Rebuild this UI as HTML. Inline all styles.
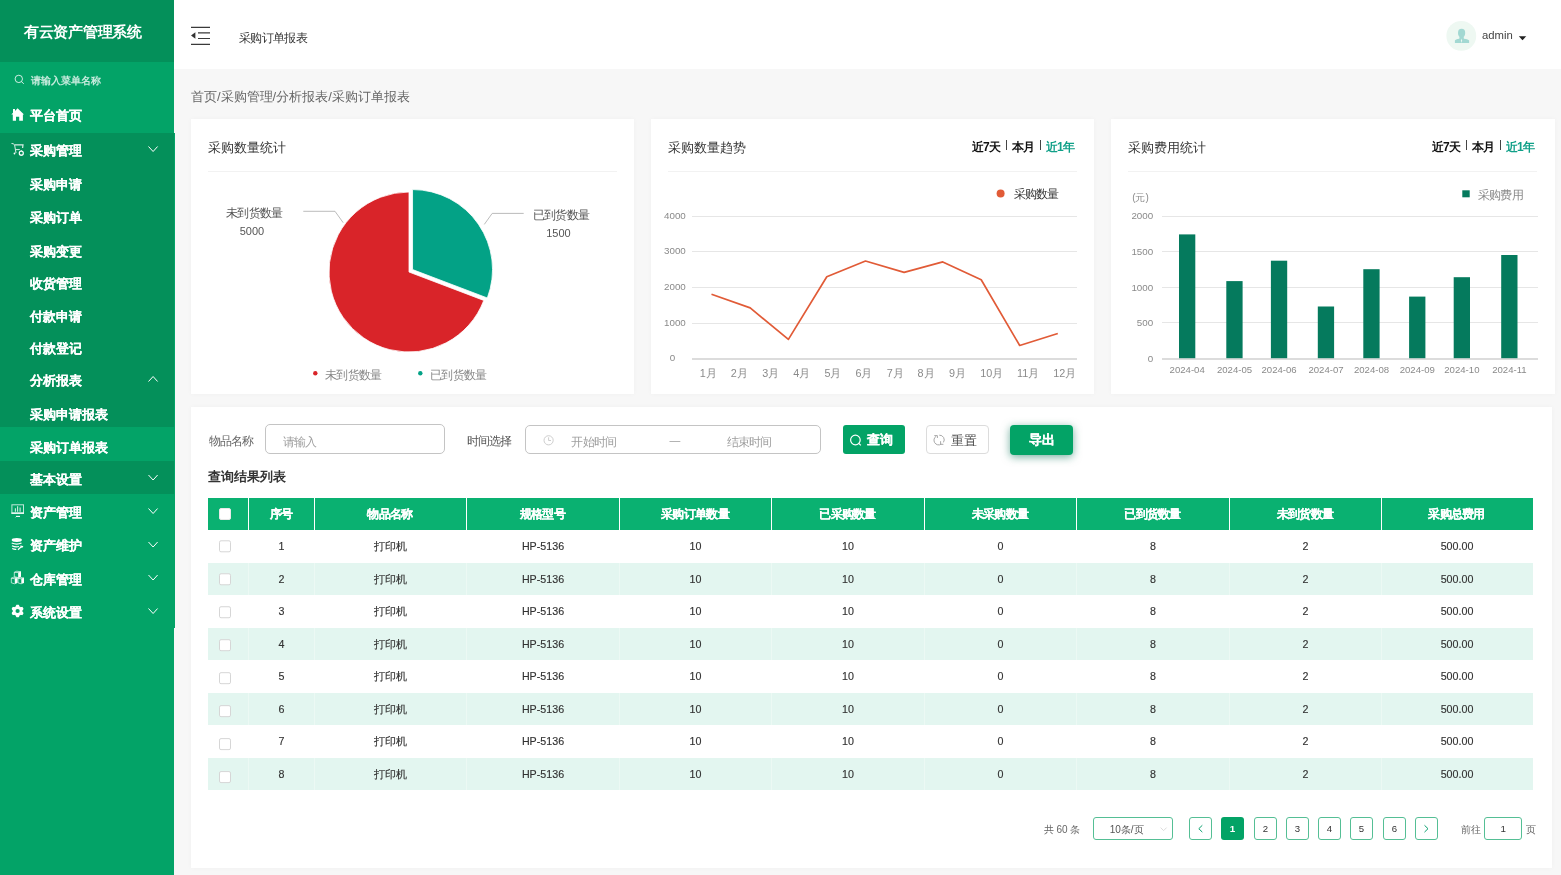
<!DOCTYPE html>
<html><head><meta charset="utf-8">
<style>
*{box-sizing:border-box;margin:0;padding:0}
html,body{width:1561px;height:875px;overflow:hidden}
body{background:#f7f7f7;font-family:"Liberation Sans",sans-serif;color:#333;position:relative}
.t{position:absolute;white-space:nowrap}
.r{position:absolute}
svg{position:absolute;left:0;top:0}
</style></head><body>
<div class="r" style="left:0px;top:0px;width:174px;height:875px;background:#03a367"></div>
<div class="r" style="left:0px;top:0px;width:174px;height:62px;background:#04905a"></div>
<div class="r" style="left:0px;top:133px;width:175px;height:294px;background:#04905a"></div>
<div class="r" style="left:0px;top:461px;width:175px;height:33px;background:#04905a"></div>
<div class="r" style="left:174px;top:133px;width:1px;height:495px;background:#03a367"></div>
<div class="r" style="left:174px;top:0px;width:1387px;height:69px;background:#fff"></div>
<div class="r" style="left:191px;top:119px;width:443px;height:275px;background:#fff;box-shadow:0 0 5px rgba(0,0,0,0.03)"></div>
<div class="r" style="left:651px;top:119px;width:443px;height:275px;background:#fff;box-shadow:0 0 5px rgba(0,0,0,0.03)"></div>
<div class="r" style="left:1111px;top:119px;width:444px;height:275px;background:#fff;box-shadow:0 0 5px rgba(0,0,0,0.03)"></div>
<div class="r" style="left:191px;top:407px;width:1361px;height:461px;background:#fff;box-shadow:0 0 5px rgba(0,0,0,0.03)"></div>
<div class="r" style="left:208px;top:171px;width:409px;height:1px;background:#f2f2f2"></div>
<div class="r" style="left:668px;top:171px;width:409px;height:1px;background:#f2f2f2"></div>
<div class="r" style="left:1128px;top:171px;width:409px;height:1px;background:#f2f2f2"></div>
<div class="r" style="left:208px;top:498px;width:1325px;height:32px;background:#0ab171"></div>
<div class="r" style="left:208px;top:562.5px;width:1325px;height:32.5px;background:#e3f6f0"></div>
<div class="r" style="left:248px;top:562.5px;width:1px;height:32.5px;background:#ecf9f4"></div>
<div class="r" style="left:314px;top:562.5px;width:1px;height:32.5px;background:#ecf9f4"></div>
<div class="r" style="left:466px;top:562.5px;width:1px;height:32.5px;background:#ecf9f4"></div>
<div class="r" style="left:619px;top:562.5px;width:1px;height:32.5px;background:#ecf9f4"></div>
<div class="r" style="left:771px;top:562.5px;width:1px;height:32.5px;background:#ecf9f4"></div>
<div class="r" style="left:924px;top:562.5px;width:1px;height:32.5px;background:#ecf9f4"></div>
<div class="r" style="left:1076px;top:562.5px;width:1px;height:32.5px;background:#ecf9f4"></div>
<div class="r" style="left:1229px;top:562.5px;width:1px;height:32.5px;background:#ecf9f4"></div>
<div class="r" style="left:1381px;top:562.5px;width:1px;height:32.5px;background:#ecf9f4"></div>
<div class="r" style="left:208px;top:627.5px;width:1325px;height:32.5px;background:#e3f6f0"></div>
<div class="r" style="left:248px;top:627.5px;width:1px;height:32.5px;background:#ecf9f4"></div>
<div class="r" style="left:314px;top:627.5px;width:1px;height:32.5px;background:#ecf9f4"></div>
<div class="r" style="left:466px;top:627.5px;width:1px;height:32.5px;background:#ecf9f4"></div>
<div class="r" style="left:619px;top:627.5px;width:1px;height:32.5px;background:#ecf9f4"></div>
<div class="r" style="left:771px;top:627.5px;width:1px;height:32.5px;background:#ecf9f4"></div>
<div class="r" style="left:924px;top:627.5px;width:1px;height:32.5px;background:#ecf9f4"></div>
<div class="r" style="left:1076px;top:627.5px;width:1px;height:32.5px;background:#ecf9f4"></div>
<div class="r" style="left:1229px;top:627.5px;width:1px;height:32.5px;background:#ecf9f4"></div>
<div class="r" style="left:1381px;top:627.5px;width:1px;height:32.5px;background:#ecf9f4"></div>
<div class="r" style="left:208px;top:692.5px;width:1325px;height:32.5px;background:#e3f6f0"></div>
<div class="r" style="left:248px;top:692.5px;width:1px;height:32.5px;background:#ecf9f4"></div>
<div class="r" style="left:314px;top:692.5px;width:1px;height:32.5px;background:#ecf9f4"></div>
<div class="r" style="left:466px;top:692.5px;width:1px;height:32.5px;background:#ecf9f4"></div>
<div class="r" style="left:619px;top:692.5px;width:1px;height:32.5px;background:#ecf9f4"></div>
<div class="r" style="left:771px;top:692.5px;width:1px;height:32.5px;background:#ecf9f4"></div>
<div class="r" style="left:924px;top:692.5px;width:1px;height:32.5px;background:#ecf9f4"></div>
<div class="r" style="left:1076px;top:692.5px;width:1px;height:32.5px;background:#ecf9f4"></div>
<div class="r" style="left:1229px;top:692.5px;width:1px;height:32.5px;background:#ecf9f4"></div>
<div class="r" style="left:1381px;top:692.5px;width:1px;height:32.5px;background:#ecf9f4"></div>
<div class="r" style="left:208px;top:757.5px;width:1325px;height:32.5px;background:#e3f6f0"></div>
<div class="r" style="left:248px;top:757.5px;width:1px;height:32.5px;background:#ecf9f4"></div>
<div class="r" style="left:314px;top:757.5px;width:1px;height:32.5px;background:#ecf9f4"></div>
<div class="r" style="left:466px;top:757.5px;width:1px;height:32.5px;background:#ecf9f4"></div>
<div class="r" style="left:619px;top:757.5px;width:1px;height:32.5px;background:#ecf9f4"></div>
<div class="r" style="left:771px;top:757.5px;width:1px;height:32.5px;background:#ecf9f4"></div>
<div class="r" style="left:924px;top:757.5px;width:1px;height:32.5px;background:#ecf9f4"></div>
<div class="r" style="left:1076px;top:757.5px;width:1px;height:32.5px;background:#ecf9f4"></div>
<div class="r" style="left:1229px;top:757.5px;width:1px;height:32.5px;background:#ecf9f4"></div>
<div class="r" style="left:1381px;top:757.5px;width:1px;height:32.5px;background:#ecf9f4"></div>
<div class="r" style="left:248px;top:498px;width:1px;height:32px;background:#fff"></div>
<div class="r" style="left:314px;top:498px;width:1px;height:32px;background:#fff"></div>
<div class="r" style="left:466px;top:498px;width:1px;height:32px;background:#fff"></div>
<div class="r" style="left:619px;top:498px;width:1px;height:32px;background:#fff"></div>
<div class="r" style="left:771px;top:498px;width:1px;height:32px;background:#fff"></div>
<div class="r" style="left:924px;top:498px;width:1px;height:32px;background:#fff"></div>
<div class="r" style="left:1076px;top:498px;width:1px;height:32px;background:#fff"></div>
<div class="r" style="left:1229px;top:498px;width:1px;height:32px;background:#fff"></div>
<div class="r" style="left:1381px;top:498px;width:1px;height:32px;background:#fff"></div>
<div class="r" style="left:265px;top:424px;width:180px;height:30px;border:1px solid #c4c4c4;border-radius:5px;background:#fff"></div>
<div class="r" style="left:525px;top:425px;width:296px;height:29px;border:1px solid #c4c4c4;border-radius:5px;background:#fff"></div>
<div class="r" style="left:843px;top:425px;width:62px;height:29px;background:#03a366;border-radius:3px"></div>
<div class="r" style="left:926px;top:425px;width:63px;height:29px;border:1px solid #dcdcdc;border-radius:4px;background:#fff"></div>
<div class="r" style="left:1010px;top:425px;width:63px;height:30px;background:#03a366;border-radius:4px;box-shadow:0 2px 8px rgba(3,110,80,0.55)"></div>
<div class="r" style="left:1093px;top:817px;width:80px;height:23px;border:1px solid #55bf95;border-radius:3px;background:#fff"></div>
<div class="r" style="left:1189px;top:817px;width:23px;height:23px;border:1px solid #55bf95;border-radius:3px;background:#fff"></div>
<div class="r" style="left:1254px;top:817px;width:23px;height:23px;border:1px solid #55bf95;border-radius:3px;background:#fff"></div>
<div class="r" style="left:1286px;top:817px;width:23px;height:23px;border:1px solid #55bf95;border-radius:3px;background:#fff"></div>
<div class="r" style="left:1318px;top:817px;width:23px;height:23px;border:1px solid #55bf95;border-radius:3px;background:#fff"></div>
<div class="r" style="left:1350px;top:817px;width:23px;height:23px;border:1px solid #55bf95;border-radius:3px;background:#fff"></div>
<div class="r" style="left:1383px;top:817px;width:23px;height:23px;border:1px solid #55bf95;border-radius:3px;background:#fff"></div>
<div class="r" style="left:1415px;top:817px;width:23px;height:23px;border:1px solid #55bf95;border-radius:3px;background:#fff"></div>
<div class="r" style="left:1221px;top:817px;width:23px;height:23px;background:#03a366;border-radius:3px"></div>
<div class="r" style="left:1484px;top:817px;width:38px;height:23px;border:1px solid #55bf95;border-radius:3px;background:#fff"></div>
<svg width="1561" height="875" viewBox="0 0 1561 875"><circle cx="18.8" cy="78.9" r="3.7" fill="none" stroke="rgba(255,255,255,0.8)" stroke-width="1"/><line x1="21.5" y1="81.6" x2="23.8" y2="83.9" stroke="rgba(255,255,255,0.8)" stroke-width="1"/><path d="M17.6 108.3 L24 114.5 L22.9 114.5 L22.9 120.8 L19.2 120.8 L19.2 116.8 L16 116.8 L16 120.8 L12.8 120.8 L12.8 114.5 L11.3 114.5 L13 112.8 L13 109 L15 109 L15 110.9 Z" fill="#fff"/><path d="M11.5 143.5 Q14 143.3 14.6 145 L16 153" fill="none" stroke="rgba(255,255,255,0.85)" stroke-width="1"/><path d="M15 144.8 L23 144.8 L22.6 148" fill="none" stroke="rgba(255,255,255,0.85)" stroke-width="1.2"/><line x1="15.8" y1="149.6" x2="19.8" y2="149.6" stroke="rgba(255,255,255,0.85)" stroke-width="1"/><circle cx="14.5" cy="153.5" r="0.9" fill="#fff"/><circle cx="21.3" cy="153.2" r="2" fill="none" stroke="#fff" stroke-width="1.2"/><path d="M21.3 150.3 V151 M21.3 155.3 V156" stroke="#fff" stroke-width="1"/><rect x="11.9" y="504.8" width="11.6" height="8.2" fill="none" stroke="rgba(255,255,255,0.75)" stroke-width="1"/><line x1="11.4" y1="513.2" x2="24" y2="513.2" stroke="#fff" stroke-width="1.3"/><path d="M15.4 511.8 V508.2 M17.6 511.8 V506.3 M20.1 511.8 V507.6" stroke="rgba(255,255,255,0.8)" stroke-width="1.1"/><line x1="16" y1="516.4" x2="20" y2="516.4" stroke="#fff" stroke-width="1.1"/><line x1="15.3" y1="517.6" x2="16.2" y2="516.6" stroke="rgba(255,255,255,0.6)" stroke-width="0.8"/><ellipse cx="16.8" cy="540" rx="5.1" ry="1.9" fill="#fff"/><path d="M11.7 543 Q16.8 545.2 21.5 543 M11.9 545.7 Q15.5 547.5 19 546.5 M12.2 548.5 Q14.5 549.6 16.3 549.3" fill="none" stroke="#fff" stroke-width="1.2"/><path d="M18 549.8 L21.6 546.4 M20.6 545.6 L21.9 547.2 L23 546.3" fill="none" stroke="#fff" stroke-width="1.3"/><path d="M18.5 572.4 L21 571.8 L21 576.8 L18.5 577.8 Z" fill="#fff"/><path d="M14.3 572.3 L16.8 571.2 L21 571.8 L18.5 572.6 Z M14.3 572.3 V576.6 L18.5 577.7 V572.6" fill="none" stroke="rgba(255,255,255,0.75)" stroke-width="0.9"/><path d="M14.8 578.7 L17.5 578 L17.5 583 L14.8 583.9 Z" fill="#fff"/><path d="M11.3 578.2 L13.8 577.2 L17.5 578 L14.8 578.7 Z M11.3 578.2 V582.8 L14.8 583.9" fill="none" stroke="rgba(255,255,255,0.75)" stroke-width="0.9"/><path d="M21.3 578.8 L24 578.1 L24 583 L21.3 583.9 Z" fill="#fff"/><path d="M18 578.3 L20.5 577.4 L24 578.1 L21.3 578.8 Z M18 578.3 V582.8 L21.3 583.9" fill="none" stroke="rgba(255,255,255,0.75)" stroke-width="0.9"/><polygon points="17.60,604.70 17.82,604.70 18.04,604.72 18.26,604.73 18.48,604.76 18.69,604.80 18.88,604.96 19.03,605.26 19.16,605.56 19.27,605.86 19.36,606.16 19.44,606.46 19.59,606.52 19.75,606.60 19.90,606.67 20.05,606.76 20.20,606.84 20.34,606.94 20.48,607.04 20.62,607.14 20.91,607.05 21.22,606.98 21.53,606.93 21.86,606.89 22.19,606.87 22.43,606.95 22.56,607.12 22.70,607.30 22.82,607.48 22.94,607.66 23.06,607.85 23.16,608.04 23.26,608.24 23.36,608.44 23.44,608.64 23.52,608.85 23.47,609.09 23.29,609.37 23.10,609.63 22.89,609.88 22.68,610.10 22.45,610.32 22.47,610.49 22.49,610.66 22.50,610.83 22.50,611.00 22.50,611.17 22.49,611.34 22.47,611.51 22.45,611.68 22.68,611.90 22.89,612.12 23.10,612.37 23.29,612.63 23.47,612.91 23.52,613.15 23.44,613.36 23.36,613.56 23.26,613.76 23.16,613.96 23.06,614.15 22.94,614.34 22.82,614.52 22.70,614.70 22.56,614.88 22.43,615.05 22.19,615.13 21.86,615.11 21.53,615.07 21.22,615.02 20.91,614.95 20.62,614.86 20.48,614.96 20.34,615.06 20.20,615.16 20.05,615.24 19.90,615.33 19.75,615.40 19.59,615.48 19.44,615.54 19.36,615.84 19.27,616.14 19.16,616.44 19.03,616.74 18.88,617.04 18.69,617.20 18.48,617.24 18.26,617.27 18.04,617.28 17.82,617.30 17.60,617.30 17.38,617.30 17.16,617.28 16.94,617.27 16.72,617.24 16.51,617.20 16.32,617.04 16.17,616.74 16.04,616.44 15.93,616.14 15.84,615.84 15.76,615.54 15.61,615.48 15.45,615.40 15.30,615.33 15.15,615.24 15.00,615.16 14.86,615.06 14.72,614.96 14.58,614.86 14.29,614.95 13.98,615.02 13.67,615.07 13.34,615.11 13.01,615.13 12.77,615.05 12.64,614.88 12.50,614.70 12.38,614.52 12.26,614.34 12.14,614.15 12.04,613.96 11.94,613.76 11.84,613.56 11.76,613.36 11.68,613.15 11.73,612.91 11.91,612.63 12.10,612.37 12.31,612.12 12.52,611.90 12.75,611.68 12.73,611.51 12.71,611.34 12.70,611.17 12.70,611.00 12.70,610.83 12.71,610.66 12.73,610.49 12.75,610.32 12.52,610.10 12.31,609.88 12.10,609.63 11.91,609.37 11.73,609.09 11.68,608.85 11.76,608.64 11.84,608.44 11.94,608.24 12.04,608.04 12.14,607.85 12.26,607.66 12.38,607.48 12.50,607.30 12.64,607.12 12.77,606.95 13.01,606.87 13.34,606.89 13.67,606.93 13.98,606.98 14.29,607.05 14.58,607.14 14.72,607.04 14.86,606.94 15.00,606.84 15.15,606.76 15.30,606.67 15.45,606.60 15.61,606.52 15.76,606.46 15.84,606.16 15.93,605.86 16.04,605.56 16.17,605.26 16.32,604.96 16.51,604.80 16.72,604.76 16.94,604.73 17.16,604.72 17.38,604.70" fill="#fff"/><circle cx="17.6" cy="611" r="2.1" fill="#03a367"/><path d="M148.5 146.5 L153.1 151.5 L157.6 146.5" fill="none" stroke="#fff" stroke-width="1"/><path d="M148.5 381.5 L153.1 376.5 L157.6 381.5" fill="none" stroke="#fff" stroke-width="1"/><path d="M148.5 475.0 L153.1 480.0 L157.6 475.0" fill="none" stroke="#fff" stroke-width="1"/><path d="M148.5 508.5 L153.1 513.5 L157.6 508.5" fill="none" stroke="#fff" stroke-width="1"/><path d="M148.5 542.0 L153.1 547.0 L157.6 542.0" fill="none" stroke="#fff" stroke-width="1"/><path d="M148.5 575.0 L153.1 580.0 L157.6 575.0" fill="none" stroke="#fff" stroke-width="1"/><path d="M148.5 608.5 L153.1 613.5 L157.6 608.5" fill="none" stroke="#fff" stroke-width="1"/><path d="M191 27.4 H210 M198 32.9 H210 M198 38.5 H210 M191 44.4 H210" stroke="#3a3a3a" stroke-width="1.2"/><path d="M191 35.5 L195.4 32.2 L195.4 38.7 Z" fill="#333"/><circle cx="1461.3" cy="35.9" r="14.9" fill="#eef8f2"/><ellipse cx="1461.6" cy="33" rx="3.6" ry="4.2" fill="#a2d8d2"/><path d="M1459.6 36 L1463.6 36 L1463.9 38.7 Q1468.6 39 1469.1 40.6 L1469.1 42.9 L1454.9 42.9 L1454.9 40.6 Q1455.4 39 1459.3 38.7 Z" fill="#a2d8d2"/><path d="M1461.5 38.6 L1462.1 40.8 L1461.5 42.9 L1460.9 40.8 Z" fill="#eef8f2"/><path d="M1518.8 36.2 L1526.3 36.2 L1522.5 40.2 Z" fill="#222"/><path d="M409,272 L483.79,300.41 A80,80 0 1 1 409.00,192.00 Z" fill="#d92429" stroke="#fff" stroke-width="0.8" stroke-linejoin="round"/><path d="M412.5394863846981,269.55827189627166 L412.54,189.56 A80,80 0 0 1 487.33,297.97 Z" fill="#03a286" stroke="#fff" stroke-width="0.8" stroke-linejoin="round"/><path d="M303.3 211.3 L335 211.3 L343.2 222.7" fill="none" stroke="#aaa" stroke-width="0.8"/><path d="M484.3 224.4 L492.2 213.4 L523.7 213.4" fill="none" stroke="#aaa" stroke-width="0.8"/><circle cx="315.3" cy="373.3" r="2.2" fill="#d92429"/><circle cx="420.3" cy="373.3" r="2.2" fill="#03a286"/><line x1="692" y1="216.5" x2="1077" y2="216.5" stroke="#e6e6e6" stroke-width="1"/><line x1="692" y1="251.5" x2="1077" y2="251.5" stroke="#e6e6e6" stroke-width="1"/><line x1="692" y1="287.5" x2="1077" y2="287.5" stroke="#e6e6e6" stroke-width="1"/><line x1="692" y1="323.5" x2="1077" y2="323.5" stroke="#e6e6e6" stroke-width="1"/><line x1="692" y1="359" x2="1077" y2="359" stroke="#dcdcdc" stroke-width="2"/><polyline points="711.5,294.2 750.2,307.9 788.4,339.4 826.8,276.8 865.5,261 904.1,272.4 942.8,261.9 981.2,279.7 1019.7,345.5 1057.8,333.5" fill="none" stroke="#e15b37" stroke-width="1.7" stroke-linejoin="round"/><circle cx="1000.6" cy="193.6" r="4" fill="#e15b37"/><line x1="1162" y1="216.5" x2="1538" y2="216.5" stroke="#e6e6e6" stroke-width="1"/><line x1="1162" y1="251.5" x2="1538" y2="251.5" stroke="#e6e6e6" stroke-width="1"/><line x1="1162" y1="287.5" x2="1538" y2="287.5" stroke="#e6e6e6" stroke-width="1"/><line x1="1162" y1="322.5" x2="1538" y2="322.5" stroke="#e6e6e6" stroke-width="1"/><line x1="1162" y1="359" x2="1538" y2="359" stroke="#dcdcdc" stroke-width="2"/><rect x="1179" y="234.4" width="16.3" height="123.8" fill="#057a5d"/><rect x="1226.3" y="281.1" width="16.3" height="77.1" fill="#057a5d"/><rect x="1270.9" y="260.7" width="16.3" height="97.5" fill="#057a5d"/><rect x="1317.8" y="306.5" width="16.3" height="51.7" fill="#057a5d"/><rect x="1363.3" y="269.2" width="16.3" height="89.0" fill="#057a5d"/><rect x="1409.1" y="296.6" width="16.3" height="61.6" fill="#057a5d"/><rect x="1453.7" y="277.2" width="16.3" height="81.0" fill="#057a5d"/><rect x="1501.2" y="255" width="16.3" height="103.2" fill="#057a5d"/><rect x="1462.3" y="190.3" width="7.4" height="7" fill="#057a5d"/><circle cx="548.6" cy="440.3" r="4.6" fill="none" stroke="#c8c8c8" stroke-width="0.9"/><path d="M548.6 437.3 V440.5 H551" fill="none" stroke="#c8c8c8" stroke-width="0.9"/><circle cx="855.4" cy="440" r="4.8" fill="none" stroke="#fff" stroke-width="1.2"/><line x1="858.8" y1="443.4" x2="860.8" y2="445.4" stroke="#fff" stroke-width="1.2"/><path d="M939.3 435.2 A4.6 4.6 0 0 1 943.4 442.4 M936.2 436.2 A4.6 4.6 0 0 0 941.2 444.2 M934.3 435.6 H937.4 V438 M940.6 441.2 V444.3 H943.4" fill="none" stroke="#a8a8a8" stroke-width="1"/><rect x="219.5" y="508.5" width="11" height="11" rx="1.5" fill="#fff" stroke="#e8e8e8" stroke-width="1"/><rect x="219.5" y="540.8" width="11" height="11" rx="1.5" fill="#fff" stroke="#d6d6d6" stroke-width="1"/><rect x="219.5" y="573.77" width="11" height="11" rx="1.5" fill="#fff" stroke="#d6d6d6" stroke-width="1"/><rect x="219.5" y="606.74" width="11" height="11" rx="1.5" fill="#fff" stroke="#d6d6d6" stroke-width="1"/><rect x="219.5" y="639.7099999999999" width="11" height="11" rx="1.5" fill="#fff" stroke="#d6d6d6" stroke-width="1"/><rect x="219.5" y="672.68" width="11" height="11" rx="1.5" fill="#fff" stroke="#d6d6d6" stroke-width="1"/><rect x="219.5" y="705.65" width="11" height="11" rx="1.5" fill="#fff" stroke="#d6d6d6" stroke-width="1"/><rect x="219.5" y="738.6199999999999" width="11" height="11" rx="1.5" fill="#fff" stroke="#d6d6d6" stroke-width="1"/><rect x="219.5" y="771.5899999999999" width="11" height="11" rx="1.5" fill="#fff" stroke="#d6d6d6" stroke-width="1"/><path d="M1202.3 825.3 L1198.8 828.7 L1202.3 832.1" fill="none" stroke="#0aa06e" stroke-width="1"/><path d="M1424.5 825.3 L1428 828.7 L1424.5 832.1" fill="none" stroke="#0aa06e" stroke-width="1"/><path d="M1160.6 827.6 L1163.6 830.6 L1166.6 827.6" fill="none" stroke="#d8d8d8" stroke-width="0.9"/></svg>
<div style="position:absolute;left:0;top:0;width:1561px;height:875px;will-change:transform">
<div class="t" style="left:24.00px;top:22.50px;font-size:15px;line-height:18px;color:#fff;font-weight:bold;letter-spacing:-0.3px;">有云资产管理系统</div>
<div class="t" style="left:31.00px;top:74.80px;font-size:10px;line-height:12px;color:rgba(255,255,255,0.78);font-weight:bold;">请输入菜单名称</div>
<div class="t" style="left:30.00px;top:108.00px;font-size:13px;line-height:16px;color:#fff;font-weight:bold;-webkit-text-stroke:0.1px #fff;">平台首页</div>
<div class="t" style="left:30.00px;top:143.00px;font-size:13px;line-height:16px;color:#fff;font-weight:bold;-webkit-text-stroke:0.1px #fff;">采购管理</div>
<div class="t" style="left:30.00px;top:177.00px;font-size:13px;line-height:16px;color:#fff;font-weight:bold;-webkit-text-stroke:0.1px #fff;">采购申请</div>
<div class="t" style="left:30.00px;top:210.00px;font-size:13px;line-height:16px;color:#fff;font-weight:bold;-webkit-text-stroke:0.1px #fff;">采购订单</div>
<div class="t" style="left:30.00px;top:243.50px;font-size:13px;line-height:16px;color:#fff;font-weight:bold;-webkit-text-stroke:0.1px #fff;">采购变更</div>
<div class="t" style="left:30.00px;top:276.00px;font-size:13px;line-height:16px;color:#fff;font-weight:bold;-webkit-text-stroke:0.1px #fff;">收货管理</div>
<div class="t" style="left:30.00px;top:309.00px;font-size:13px;line-height:16px;color:#fff;font-weight:bold;-webkit-text-stroke:0.1px #fff;">付款申请</div>
<div class="t" style="left:30.00px;top:341.00px;font-size:13px;line-height:16px;color:#fff;font-weight:bold;-webkit-text-stroke:0.1px #fff;">付款登记</div>
<div class="t" style="left:30.00px;top:373.00px;font-size:13px;line-height:16px;color:#fff;font-weight:bold;-webkit-text-stroke:0.1px #fff;">分析报表</div>
<div class="t" style="left:30.00px;top:406.50px;font-size:13px;line-height:16px;color:#fff;font-weight:bold;-webkit-text-stroke:0.1px #fff;">采购申请报表</div>
<div class="t" style="left:30.00px;top:440.00px;font-size:13px;line-height:16px;color:#fff;font-weight:bold;-webkit-text-stroke:0.1px #fff;">采购订单报表</div>
<div class="t" style="left:30.00px;top:471.50px;font-size:13px;line-height:16px;color:#fff;font-weight:bold;-webkit-text-stroke:0.1px #fff;">基本设置</div>
<div class="t" style="left:30.00px;top:504.50px;font-size:13px;line-height:16px;color:#fff;font-weight:bold;-webkit-text-stroke:0.1px #fff;">资产管理</div>
<div class="t" style="left:30.00px;top:538.00px;font-size:13px;line-height:16px;color:#fff;font-weight:bold;-webkit-text-stroke:0.1px #fff;">资产维护</div>
<div class="t" style="left:30.00px;top:571.50px;font-size:13px;line-height:16px;color:#fff;font-weight:bold;-webkit-text-stroke:0.1px #fff;">仓库管理</div>
<div class="t" style="left:30.00px;top:604.50px;font-size:13px;line-height:16px;color:#fff;font-weight:bold;-webkit-text-stroke:0.1px #fff;">系统设置</div>
<div class="t" style="left:239.00px;top:29.50px;font-size:12px;line-height:16px;color:#333;font-weight:normal;letter-spacing:-0.7px;">采购订单报表</div>
<div class="t" style="left:1482.00px;top:27.40px;font-size:11.3px;line-height:16px;color:#444;font-weight:normal;">admin</div>
<div class="t" style="left:191.00px;top:89.00px;font-size:13px;line-height:16px;color:#666;font-weight:normal;">首页/采购管理/分析报表/采购订单报表</div>
<div class="t" style="left:208.00px;top:139.50px;font-size:13px;line-height:16px;color:#333;font-weight:normal;">采购数量统计</div>
<div class="t" style="left:668.00px;top:139.50px;font-size:13px;line-height:16px;color:#333;font-weight:normal;">采购数量趋势</div>
<div class="t" style="left:1128.00px;top:139.50px;font-size:13px;line-height:16px;color:#333;font-weight:normal;">采购费用统计</div>
<div class="t" style="left:972.00px;top:139.00px;font-size:12px;line-height:16px;color:#111;font-weight:600;letter-spacing:-1px;">近7天</div>
<div class="r" style="left:1006px;top:140px;width:1px;height:10px;background:#444"></div>
<div class="t" style="left:1012.00px;top:139.00px;font-size:12px;line-height:16px;color:#111;font-weight:600;letter-spacing:-1px;">本月</div>
<div class="r" style="left:1040px;top:140px;width:1px;height:10px;background:#444"></div>
<div class="t" style="left:1046.00px;top:139.00px;font-size:12px;line-height:16px;color:#10a088;font-weight:600;letter-spacing:-1px;">近1年</div>
<div class="t" style="left:1432.00px;top:139.00px;font-size:12px;line-height:16px;color:#111;font-weight:600;letter-spacing:-1px;">近7天</div>
<div class="r" style="left:1466px;top:140px;width:1px;height:10px;background:#444"></div>
<div class="t" style="left:1472.00px;top:139.00px;font-size:12px;line-height:16px;color:#111;font-weight:600;letter-spacing:-1px;">本月</div>
<div class="r" style="left:1500px;top:140px;width:1px;height:10px;background:#444"></div>
<div class="t" style="left:1506.00px;top:139.00px;font-size:12px;line-height:16px;color:#10a088;font-weight:600;letter-spacing:-1px;">近1年</div>
<div class="t" style="left:214.30px;top:205.00px;width:80px;text-align:center;font-size:12px;line-height:16px;color:#555;font-weight:normal;letter-spacing:-0.7px;">未到货数量</div>
<div class="t" style="left:212.00px;top:224.00px;width:80px;text-align:center;font-size:11px;line-height:14px;color:#555;font-weight:normal;">5000</div>
<div class="t" style="left:521.00px;top:207.00px;width:80px;text-align:center;font-size:12px;line-height:16px;color:#555;font-weight:normal;letter-spacing:-0.7px;">已到货数量</div>
<div class="t" style="left:518.50px;top:226.30px;width:80px;text-align:center;font-size:11px;line-height:14px;color:#555;font-weight:normal;">1500</div>
<div class="t" style="left:325.00px;top:366.50px;font-size:12px;line-height:16px;color:#888;font-weight:normal;letter-spacing:-0.7px;">未到货数量</div>
<div class="t" style="left:430.00px;top:366.50px;font-size:12px;line-height:16px;color:#888;font-weight:normal;letter-spacing:-0.7px;">已到货数量</div>
<div class="t" style="left:645.80px;top:209.90px;width:40px;text-align:right;font-size:9.8px;line-height:12px;color:#8a8a8a;font-weight:normal;">4000</div>
<div class="t" style="left:645.80px;top:245.00px;width:40px;text-align:right;font-size:9.8px;line-height:12px;color:#8a8a8a;font-weight:normal;">3000</div>
<div class="t" style="left:645.80px;top:281.00px;width:40px;text-align:right;font-size:9.8px;line-height:12px;color:#8a8a8a;font-weight:normal;">2000</div>
<div class="t" style="left:645.80px;top:316.80px;width:40px;text-align:right;font-size:9.8px;line-height:12px;color:#8a8a8a;font-weight:normal;">1000</div>
<div class="t" style="left:652.60px;top:352.40px;width:40px;text-align:center;font-size:9.8px;line-height:12px;color:#8a8a8a;font-weight:normal;">0</div>
<div class="t" style="left:688.20px;top:366.50px;width:40px;text-align:center;font-size:10.8px;line-height:12px;color:#8a8a8a;font-weight:normal;">1月</div>
<div class="t" style="left:719.30px;top:366.50px;width:40px;text-align:center;font-size:10.8px;line-height:12px;color:#8a8a8a;font-weight:normal;">2月</div>
<div class="t" style="left:750.70px;top:366.50px;width:40px;text-align:center;font-size:10.8px;line-height:12px;color:#8a8a8a;font-weight:normal;">3月</div>
<div class="t" style="left:781.80px;top:366.50px;width:40px;text-align:center;font-size:10.8px;line-height:12px;color:#8a8a8a;font-weight:normal;">4月</div>
<div class="t" style="left:813.00px;top:366.50px;width:40px;text-align:center;font-size:10.8px;line-height:12px;color:#8a8a8a;font-weight:normal;">5月</div>
<div class="t" style="left:843.90px;top:366.50px;width:40px;text-align:center;font-size:10.8px;line-height:12px;color:#8a8a8a;font-weight:normal;">6月</div>
<div class="t" style="left:875.20px;top:366.50px;width:40px;text-align:center;font-size:10.8px;line-height:12px;color:#8a8a8a;font-weight:normal;">7月</div>
<div class="t" style="left:906.10px;top:366.50px;width:40px;text-align:center;font-size:10.8px;line-height:12px;color:#8a8a8a;font-weight:normal;">8月</div>
<div class="t" style="left:937.40px;top:366.50px;width:40px;text-align:center;font-size:10.8px;line-height:12px;color:#8a8a8a;font-weight:normal;">9月</div>
<div class="t" style="left:971.70px;top:366.50px;width:40px;text-align:center;font-size:10.8px;line-height:12px;color:#8a8a8a;font-weight:normal;">10月</div>
<div class="t" style="left:1008.20px;top:366.50px;width:40px;text-align:center;font-size:10.8px;line-height:12px;color:#8a8a8a;font-weight:normal;">11月</div>
<div class="t" style="left:1044.70px;top:366.50px;width:40px;text-align:center;font-size:10.8px;line-height:12px;color:#8a8a8a;font-weight:normal;">12月</div>
<div class="t" style="left:1013.60px;top:186.00px;font-size:12px;line-height:16px;color:#333;font-weight:normal;letter-spacing:-0.7px;">采购数量</div>
<div class="t" style="left:1120.50px;top:192.30px;width:40px;text-align:center;font-size:10px;line-height:12px;color:#8a8a8a;font-weight:normal;">(元)</div>
<div class="t" style="left:1113.20px;top:210.40px;width:40px;text-align:right;font-size:9.8px;line-height:12px;color:#8a8a8a;font-weight:normal;">2000</div>
<div class="t" style="left:1113.20px;top:245.60px;width:40px;text-align:right;font-size:9.8px;line-height:12px;color:#8a8a8a;font-weight:normal;">1500</div>
<div class="t" style="left:1113.20px;top:281.80px;width:40px;text-align:right;font-size:9.8px;line-height:12px;color:#8a8a8a;font-weight:normal;">1000</div>
<div class="t" style="left:1113.20px;top:317.20px;width:40px;text-align:right;font-size:9.8px;line-height:12px;color:#8a8a8a;font-weight:normal;">500</div>
<div class="t" style="left:1113.20px;top:353.10px;width:40px;text-align:right;font-size:9.8px;line-height:12px;color:#8a8a8a;font-weight:normal;">0</div>
<div class="t" style="left:1157.20px;top:363.80px;width:60px;text-align:center;font-size:9.6px;line-height:12px;color:#8a8a8a;font-weight:normal;">2024-04</div>
<div class="t" style="left:1204.50px;top:363.80px;width:60px;text-align:center;font-size:9.6px;line-height:12px;color:#8a8a8a;font-weight:normal;">2024-05</div>
<div class="t" style="left:1249.10px;top:363.80px;width:60px;text-align:center;font-size:9.6px;line-height:12px;color:#8a8a8a;font-weight:normal;">2024-06</div>
<div class="t" style="left:1296.00px;top:363.80px;width:60px;text-align:center;font-size:9.6px;line-height:12px;color:#8a8a8a;font-weight:normal;">2024-07</div>
<div class="t" style="left:1341.50px;top:363.80px;width:60px;text-align:center;font-size:9.6px;line-height:12px;color:#8a8a8a;font-weight:normal;">2024-08</div>
<div class="t" style="left:1387.30px;top:363.80px;width:60px;text-align:center;font-size:9.6px;line-height:12px;color:#8a8a8a;font-weight:normal;">2024-09</div>
<div class="t" style="left:1431.90px;top:363.80px;width:60px;text-align:center;font-size:9.6px;line-height:12px;color:#8a8a8a;font-weight:normal;">2024-10</div>
<div class="t" style="left:1479.40px;top:363.80px;width:60px;text-align:center;font-size:9.6px;line-height:12px;color:#8a8a8a;font-weight:normal;">2024-11</div>
<div class="t" style="left:1477.90px;top:186.50px;font-size:12px;line-height:16px;color:#888;font-weight:normal;letter-spacing:-0.7px;">采购费用</div>
<div class="t" style="left:208.50px;top:432.80px;font-size:12px;line-height:16px;color:#666;font-weight:normal;letter-spacing:-0.7px;">物品名称</div>
<div class="t" style="left:282.50px;top:433.60px;font-size:12px;line-height:16px;color:#9e9e9e;font-weight:normal;letter-spacing:-0.7px;">请输入</div>
<div class="t" style="left:466.50px;top:432.60px;font-size:12px;line-height:16px;color:#555;font-weight:normal;letter-spacing:-0.7px;">时间选择</div>
<div class="t" style="left:571.40px;top:433.80px;font-size:12px;line-height:16px;color:#9e9e9e;font-weight:normal;letter-spacing:-0.7px;">开始时间</div>
<div class="t" style="left:668.60px;top:433.00px;font-size:12px;line-height:16px;color:#aaa;font-weight:normal;transform:scaleX(0.9)">—</div>
<div class="t" style="left:726.60px;top:433.80px;font-size:12px;line-height:16px;color:#9e9e9e;font-weight:normal;letter-spacing:-0.7px;">结束时间</div>
<div class="t" style="left:866.50px;top:432.00px;font-size:13px;line-height:16px;color:#fff;font-weight:bold;-webkit-text-stroke:0.2px #fff;">查询</div>
<div class="t" style="left:950.60px;top:432.80px;font-size:13px;line-height:16px;color:#4a4a4a;font-weight:normal;">重置</div>
<div class="t" style="left:1028.70px;top:432.30px;font-size:13px;line-height:16px;color:#fff;font-weight:bold;-webkit-text-stroke:0.2px #fff;">导出</div>
<div class="t" style="left:208.00px;top:468.70px;font-size:13px;line-height:16px;color:#333;font-weight:bold;">查询结果列表</div>
<div class="t" style="left:206.00px;top:505.90px;width:150px;text-align:center;font-size:12px;line-height:16px;color:#fff;font-weight:bold;-webkit-text-stroke:0.1px #fff;letter-spacing:-0.7px;">序号</div>
<div class="t" style="left:315.00px;top:505.90px;width:150px;text-align:center;font-size:12px;line-height:16px;color:#fff;font-weight:bold;-webkit-text-stroke:0.1px #fff;letter-spacing:-0.7px;">物品名称</div>
<div class="t" style="left:467.50px;top:505.90px;width:150px;text-align:center;font-size:12px;line-height:16px;color:#fff;font-weight:bold;-webkit-text-stroke:0.1px #fff;letter-spacing:-0.7px;">规格型号</div>
<div class="t" style="left:620.00px;top:505.90px;width:150px;text-align:center;font-size:12px;line-height:16px;color:#fff;font-weight:bold;-webkit-text-stroke:0.1px #fff;letter-spacing:-0.7px;">采购订单数量</div>
<div class="t" style="left:772.50px;top:505.90px;width:150px;text-align:center;font-size:12px;line-height:16px;color:#fff;font-weight:bold;-webkit-text-stroke:0.1px #fff;letter-spacing:-0.7px;">已采购数量</div>
<div class="t" style="left:925.00px;top:505.90px;width:150px;text-align:center;font-size:12px;line-height:16px;color:#fff;font-weight:bold;-webkit-text-stroke:0.1px #fff;letter-spacing:-0.7px;">未采购数量</div>
<div class="t" style="left:1077.50px;top:505.90px;width:150px;text-align:center;font-size:12px;line-height:16px;color:#fff;font-weight:bold;-webkit-text-stroke:0.1px #fff;letter-spacing:-0.7px;">已到货数量</div>
<div class="t" style="left:1230.00px;top:505.90px;width:150px;text-align:center;font-size:12px;line-height:16px;color:#fff;font-weight:bold;-webkit-text-stroke:0.1px #fff;letter-spacing:-0.7px;">未到货数量</div>
<div class="t" style="left:1381.50px;top:505.90px;width:150px;text-align:center;font-size:12px;line-height:16px;color:#fff;font-weight:bold;-webkit-text-stroke:0.1px #fff;letter-spacing:-0.7px;">采购总费用</div>
<div class="t" style="left:206.50px;top:539.25px;width:150px;text-align:center;font-size:10.7px;line-height:14px;color:#333;font-weight:normal;-webkit-text-stroke:0.15px #333;">1</div>
<div class="t" style="left:315.50px;top:539.25px;width:150px;text-align:center;font-size:10.7px;line-height:14px;color:#333;font-weight:normal;-webkit-text-stroke:0.15px #333;">打印机</div>
<div class="t" style="left:468.00px;top:539.25px;width:150px;text-align:center;font-size:10.7px;line-height:14px;color:#333;font-weight:normal;-webkit-text-stroke:0.15px #333;">HP-5136</div>
<div class="t" style="left:620.50px;top:539.25px;width:150px;text-align:center;font-size:10.7px;line-height:14px;color:#333;font-weight:normal;-webkit-text-stroke:0.15px #333;">10</div>
<div class="t" style="left:773.00px;top:539.25px;width:150px;text-align:center;font-size:10.7px;line-height:14px;color:#333;font-weight:normal;-webkit-text-stroke:0.15px #333;">10</div>
<div class="t" style="left:925.50px;top:539.25px;width:150px;text-align:center;font-size:10.7px;line-height:14px;color:#333;font-weight:normal;-webkit-text-stroke:0.15px #333;">0</div>
<div class="t" style="left:1078.00px;top:539.25px;width:150px;text-align:center;font-size:10.7px;line-height:14px;color:#333;font-weight:normal;-webkit-text-stroke:0.15px #333;">8</div>
<div class="t" style="left:1230.50px;top:539.25px;width:150px;text-align:center;font-size:10.7px;line-height:14px;color:#333;font-weight:normal;-webkit-text-stroke:0.15px #333;">2</div>
<div class="t" style="left:1382.00px;top:539.25px;width:150px;text-align:center;font-size:10.7px;line-height:14px;color:#333;font-weight:normal;-webkit-text-stroke:0.15px #333;">500.00</div>
<div class="t" style="left:206.50px;top:571.75px;width:150px;text-align:center;font-size:10.7px;line-height:14px;color:#333;font-weight:normal;-webkit-text-stroke:0.15px #333;">2</div>
<div class="t" style="left:315.50px;top:571.75px;width:150px;text-align:center;font-size:10.7px;line-height:14px;color:#333;font-weight:normal;-webkit-text-stroke:0.15px #333;">打印机</div>
<div class="t" style="left:468.00px;top:571.75px;width:150px;text-align:center;font-size:10.7px;line-height:14px;color:#333;font-weight:normal;-webkit-text-stroke:0.15px #333;">HP-5136</div>
<div class="t" style="left:620.50px;top:571.75px;width:150px;text-align:center;font-size:10.7px;line-height:14px;color:#333;font-weight:normal;-webkit-text-stroke:0.15px #333;">10</div>
<div class="t" style="left:773.00px;top:571.75px;width:150px;text-align:center;font-size:10.7px;line-height:14px;color:#333;font-weight:normal;-webkit-text-stroke:0.15px #333;">10</div>
<div class="t" style="left:925.50px;top:571.75px;width:150px;text-align:center;font-size:10.7px;line-height:14px;color:#333;font-weight:normal;-webkit-text-stroke:0.15px #333;">0</div>
<div class="t" style="left:1078.00px;top:571.75px;width:150px;text-align:center;font-size:10.7px;line-height:14px;color:#333;font-weight:normal;-webkit-text-stroke:0.15px #333;">8</div>
<div class="t" style="left:1230.50px;top:571.75px;width:150px;text-align:center;font-size:10.7px;line-height:14px;color:#333;font-weight:normal;-webkit-text-stroke:0.15px #333;">2</div>
<div class="t" style="left:1382.00px;top:571.75px;width:150px;text-align:center;font-size:10.7px;line-height:14px;color:#333;font-weight:normal;-webkit-text-stroke:0.15px #333;">500.00</div>
<div class="t" style="left:206.50px;top:604.25px;width:150px;text-align:center;font-size:10.7px;line-height:14px;color:#333;font-weight:normal;-webkit-text-stroke:0.15px #333;">3</div>
<div class="t" style="left:315.50px;top:604.25px;width:150px;text-align:center;font-size:10.7px;line-height:14px;color:#333;font-weight:normal;-webkit-text-stroke:0.15px #333;">打印机</div>
<div class="t" style="left:468.00px;top:604.25px;width:150px;text-align:center;font-size:10.7px;line-height:14px;color:#333;font-weight:normal;-webkit-text-stroke:0.15px #333;">HP-5136</div>
<div class="t" style="left:620.50px;top:604.25px;width:150px;text-align:center;font-size:10.7px;line-height:14px;color:#333;font-weight:normal;-webkit-text-stroke:0.15px #333;">10</div>
<div class="t" style="left:773.00px;top:604.25px;width:150px;text-align:center;font-size:10.7px;line-height:14px;color:#333;font-weight:normal;-webkit-text-stroke:0.15px #333;">10</div>
<div class="t" style="left:925.50px;top:604.25px;width:150px;text-align:center;font-size:10.7px;line-height:14px;color:#333;font-weight:normal;-webkit-text-stroke:0.15px #333;">0</div>
<div class="t" style="left:1078.00px;top:604.25px;width:150px;text-align:center;font-size:10.7px;line-height:14px;color:#333;font-weight:normal;-webkit-text-stroke:0.15px #333;">8</div>
<div class="t" style="left:1230.50px;top:604.25px;width:150px;text-align:center;font-size:10.7px;line-height:14px;color:#333;font-weight:normal;-webkit-text-stroke:0.15px #333;">2</div>
<div class="t" style="left:1382.00px;top:604.25px;width:150px;text-align:center;font-size:10.7px;line-height:14px;color:#333;font-weight:normal;-webkit-text-stroke:0.15px #333;">500.00</div>
<div class="t" style="left:206.50px;top:636.75px;width:150px;text-align:center;font-size:10.7px;line-height:14px;color:#333;font-weight:normal;-webkit-text-stroke:0.15px #333;">4</div>
<div class="t" style="left:315.50px;top:636.75px;width:150px;text-align:center;font-size:10.7px;line-height:14px;color:#333;font-weight:normal;-webkit-text-stroke:0.15px #333;">打印机</div>
<div class="t" style="left:468.00px;top:636.75px;width:150px;text-align:center;font-size:10.7px;line-height:14px;color:#333;font-weight:normal;-webkit-text-stroke:0.15px #333;">HP-5136</div>
<div class="t" style="left:620.50px;top:636.75px;width:150px;text-align:center;font-size:10.7px;line-height:14px;color:#333;font-weight:normal;-webkit-text-stroke:0.15px #333;">10</div>
<div class="t" style="left:773.00px;top:636.75px;width:150px;text-align:center;font-size:10.7px;line-height:14px;color:#333;font-weight:normal;-webkit-text-stroke:0.15px #333;">10</div>
<div class="t" style="left:925.50px;top:636.75px;width:150px;text-align:center;font-size:10.7px;line-height:14px;color:#333;font-weight:normal;-webkit-text-stroke:0.15px #333;">0</div>
<div class="t" style="left:1078.00px;top:636.75px;width:150px;text-align:center;font-size:10.7px;line-height:14px;color:#333;font-weight:normal;-webkit-text-stroke:0.15px #333;">8</div>
<div class="t" style="left:1230.50px;top:636.75px;width:150px;text-align:center;font-size:10.7px;line-height:14px;color:#333;font-weight:normal;-webkit-text-stroke:0.15px #333;">2</div>
<div class="t" style="left:1382.00px;top:636.75px;width:150px;text-align:center;font-size:10.7px;line-height:14px;color:#333;font-weight:normal;-webkit-text-stroke:0.15px #333;">500.00</div>
<div class="t" style="left:206.50px;top:669.25px;width:150px;text-align:center;font-size:10.7px;line-height:14px;color:#333;font-weight:normal;-webkit-text-stroke:0.15px #333;">5</div>
<div class="t" style="left:315.50px;top:669.25px;width:150px;text-align:center;font-size:10.7px;line-height:14px;color:#333;font-weight:normal;-webkit-text-stroke:0.15px #333;">打印机</div>
<div class="t" style="left:468.00px;top:669.25px;width:150px;text-align:center;font-size:10.7px;line-height:14px;color:#333;font-weight:normal;-webkit-text-stroke:0.15px #333;">HP-5136</div>
<div class="t" style="left:620.50px;top:669.25px;width:150px;text-align:center;font-size:10.7px;line-height:14px;color:#333;font-weight:normal;-webkit-text-stroke:0.15px #333;">10</div>
<div class="t" style="left:773.00px;top:669.25px;width:150px;text-align:center;font-size:10.7px;line-height:14px;color:#333;font-weight:normal;-webkit-text-stroke:0.15px #333;">10</div>
<div class="t" style="left:925.50px;top:669.25px;width:150px;text-align:center;font-size:10.7px;line-height:14px;color:#333;font-weight:normal;-webkit-text-stroke:0.15px #333;">0</div>
<div class="t" style="left:1078.00px;top:669.25px;width:150px;text-align:center;font-size:10.7px;line-height:14px;color:#333;font-weight:normal;-webkit-text-stroke:0.15px #333;">8</div>
<div class="t" style="left:1230.50px;top:669.25px;width:150px;text-align:center;font-size:10.7px;line-height:14px;color:#333;font-weight:normal;-webkit-text-stroke:0.15px #333;">2</div>
<div class="t" style="left:1382.00px;top:669.25px;width:150px;text-align:center;font-size:10.7px;line-height:14px;color:#333;font-weight:normal;-webkit-text-stroke:0.15px #333;">500.00</div>
<div class="t" style="left:206.50px;top:701.75px;width:150px;text-align:center;font-size:10.7px;line-height:14px;color:#333;font-weight:normal;-webkit-text-stroke:0.15px #333;">6</div>
<div class="t" style="left:315.50px;top:701.75px;width:150px;text-align:center;font-size:10.7px;line-height:14px;color:#333;font-weight:normal;-webkit-text-stroke:0.15px #333;">打印机</div>
<div class="t" style="left:468.00px;top:701.75px;width:150px;text-align:center;font-size:10.7px;line-height:14px;color:#333;font-weight:normal;-webkit-text-stroke:0.15px #333;">HP-5136</div>
<div class="t" style="left:620.50px;top:701.75px;width:150px;text-align:center;font-size:10.7px;line-height:14px;color:#333;font-weight:normal;-webkit-text-stroke:0.15px #333;">10</div>
<div class="t" style="left:773.00px;top:701.75px;width:150px;text-align:center;font-size:10.7px;line-height:14px;color:#333;font-weight:normal;-webkit-text-stroke:0.15px #333;">10</div>
<div class="t" style="left:925.50px;top:701.75px;width:150px;text-align:center;font-size:10.7px;line-height:14px;color:#333;font-weight:normal;-webkit-text-stroke:0.15px #333;">0</div>
<div class="t" style="left:1078.00px;top:701.75px;width:150px;text-align:center;font-size:10.7px;line-height:14px;color:#333;font-weight:normal;-webkit-text-stroke:0.15px #333;">8</div>
<div class="t" style="left:1230.50px;top:701.75px;width:150px;text-align:center;font-size:10.7px;line-height:14px;color:#333;font-weight:normal;-webkit-text-stroke:0.15px #333;">2</div>
<div class="t" style="left:1382.00px;top:701.75px;width:150px;text-align:center;font-size:10.7px;line-height:14px;color:#333;font-weight:normal;-webkit-text-stroke:0.15px #333;">500.00</div>
<div class="t" style="left:206.50px;top:734.25px;width:150px;text-align:center;font-size:10.7px;line-height:14px;color:#333;font-weight:normal;-webkit-text-stroke:0.15px #333;">7</div>
<div class="t" style="left:315.50px;top:734.25px;width:150px;text-align:center;font-size:10.7px;line-height:14px;color:#333;font-weight:normal;-webkit-text-stroke:0.15px #333;">打印机</div>
<div class="t" style="left:468.00px;top:734.25px;width:150px;text-align:center;font-size:10.7px;line-height:14px;color:#333;font-weight:normal;-webkit-text-stroke:0.15px #333;">HP-5136</div>
<div class="t" style="left:620.50px;top:734.25px;width:150px;text-align:center;font-size:10.7px;line-height:14px;color:#333;font-weight:normal;-webkit-text-stroke:0.15px #333;">10</div>
<div class="t" style="left:773.00px;top:734.25px;width:150px;text-align:center;font-size:10.7px;line-height:14px;color:#333;font-weight:normal;-webkit-text-stroke:0.15px #333;">10</div>
<div class="t" style="left:925.50px;top:734.25px;width:150px;text-align:center;font-size:10.7px;line-height:14px;color:#333;font-weight:normal;-webkit-text-stroke:0.15px #333;">0</div>
<div class="t" style="left:1078.00px;top:734.25px;width:150px;text-align:center;font-size:10.7px;line-height:14px;color:#333;font-weight:normal;-webkit-text-stroke:0.15px #333;">8</div>
<div class="t" style="left:1230.50px;top:734.25px;width:150px;text-align:center;font-size:10.7px;line-height:14px;color:#333;font-weight:normal;-webkit-text-stroke:0.15px #333;">2</div>
<div class="t" style="left:1382.00px;top:734.25px;width:150px;text-align:center;font-size:10.7px;line-height:14px;color:#333;font-weight:normal;-webkit-text-stroke:0.15px #333;">500.00</div>
<div class="t" style="left:206.50px;top:766.75px;width:150px;text-align:center;font-size:10.7px;line-height:14px;color:#333;font-weight:normal;-webkit-text-stroke:0.15px #333;">8</div>
<div class="t" style="left:315.50px;top:766.75px;width:150px;text-align:center;font-size:10.7px;line-height:14px;color:#333;font-weight:normal;-webkit-text-stroke:0.15px #333;">打印机</div>
<div class="t" style="left:468.00px;top:766.75px;width:150px;text-align:center;font-size:10.7px;line-height:14px;color:#333;font-weight:normal;-webkit-text-stroke:0.15px #333;">HP-5136</div>
<div class="t" style="left:620.50px;top:766.75px;width:150px;text-align:center;font-size:10.7px;line-height:14px;color:#333;font-weight:normal;-webkit-text-stroke:0.15px #333;">10</div>
<div class="t" style="left:773.00px;top:766.75px;width:150px;text-align:center;font-size:10.7px;line-height:14px;color:#333;font-weight:normal;-webkit-text-stroke:0.15px #333;">10</div>
<div class="t" style="left:925.50px;top:766.75px;width:150px;text-align:center;font-size:10.7px;line-height:14px;color:#333;font-weight:normal;-webkit-text-stroke:0.15px #333;">0</div>
<div class="t" style="left:1078.00px;top:766.75px;width:150px;text-align:center;font-size:10.7px;line-height:14px;color:#333;font-weight:normal;-webkit-text-stroke:0.15px #333;">8</div>
<div class="t" style="left:1230.50px;top:766.75px;width:150px;text-align:center;font-size:10.7px;line-height:14px;color:#333;font-weight:normal;-webkit-text-stroke:0.15px #333;">2</div>
<div class="t" style="left:1382.00px;top:766.75px;width:150px;text-align:center;font-size:10.7px;line-height:14px;color:#333;font-weight:normal;-webkit-text-stroke:0.15px #333;">500.00</div>
<div class="t" style="left:1043.70px;top:823.40px;font-size:10px;line-height:14px;color:#666;font-weight:normal;">共 60 条</div>
<div class="t" style="left:1109.70px;top:822.70px;font-size:10px;line-height:14px;color:#555;font-weight:normal;">10条/页</div>
<div class="t" style="left:1254.00px;top:821.80px;width:23px;text-align:center;font-size:9.6px;line-height:14px;color:#333;font-weight:normal;">2</div>
<div class="t" style="left:1286.00px;top:821.80px;width:23px;text-align:center;font-size:9.6px;line-height:14px;color:#333;font-weight:normal;">3</div>
<div class="t" style="left:1318.00px;top:821.80px;width:23px;text-align:center;font-size:9.6px;line-height:14px;color:#333;font-weight:normal;">4</div>
<div class="t" style="left:1350.00px;top:821.80px;width:23px;text-align:center;font-size:9.6px;line-height:14px;color:#333;font-weight:normal;">5</div>
<div class="t" style="left:1383.00px;top:821.80px;width:23px;text-align:center;font-size:9.6px;line-height:14px;color:#333;font-weight:normal;">6</div>
<div class="t" style="left:1221.00px;top:821.80px;width:23px;text-align:center;font-size:9.8px;line-height:14px;color:#fff;font-weight:bold;">1</div>
<div class="t" style="left:1461.40px;top:823.20px;font-size:10px;line-height:14px;color:#666;font-weight:normal;">前往</div>
<div class="t" style="left:1488.30px;top:821.60px;width:30px;text-align:center;font-size:9.8px;line-height:14px;color:#333;font-weight:normal;">1</div>
<div class="t" style="left:1525.80px;top:823.20px;font-size:10px;line-height:14px;color:#666;font-weight:normal;">页</div>
</div>
</body></html>
